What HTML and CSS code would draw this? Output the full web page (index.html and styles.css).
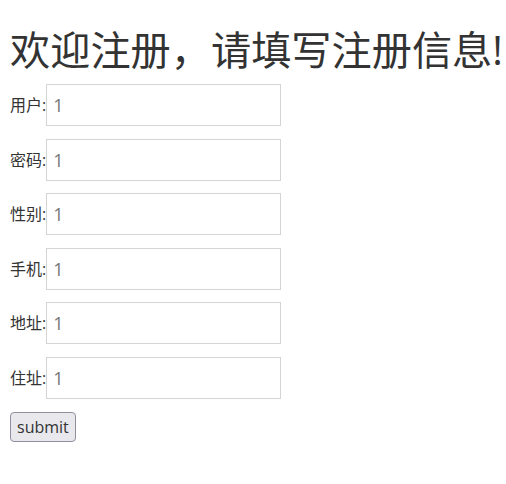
FILE: index.html
```html
<!DOCTYPE html>
<html lang="zh">
<head>
<meta charset="utf-8">
<title>注册</title>
<link rel="stylesheet" href="styles.css">
</head>
<body>
<h1 class="title">欢迎注册，请填写注册信息!</h1>
<form class="form">
  <div class="row"><label class="label">用户:</label><input class="field" type="text" placeholder="1"></div>
  <div class="row"><label class="label">密码:</label><input class="field" type="text" placeholder="1"></div>
  <div class="row"><label class="label">性别:</label><input class="field" type="text" placeholder="1"></div>
  <div class="row"><label class="label">手机:</label><input class="field" type="text" placeholder="1"></div>
  <div class="row"><label class="label">地址:</label><input class="field" type="text" placeholder="1"></div>
  <div class="row"><label class="label">住址:</label><input class="field" type="text" placeholder="1"></div>
  <button class="submit" type="button">submit</button>
</form>
</body>
</html>
```
FILE: styles.css
```css
html, body {
  margin: 0;
  padding: 0;
  background: #fff;
}
body {
  padding: 0 10px;
  font-family: "Open Sans", "Noto Sans CJK SC", sans-serif;
  color: #333;
  font-size: 16px;
}
.title {
  font-size: 40.2px;
  font-weight: 400;
  line-height: 44px;
  white-space: nowrap;
  margin: 28px 0 12px;
}
.form {
  display: flex;
  flex-direction: column;
  align-items: flex-start;
}
.row {
  display: flex;
  align-items: center;
  margin-bottom: 12.6px;
}
.label {
  font-size: 16px;
  line-height: 22px;
}
.field {
  box-sizing: border-box;
  width: 235px;
  height: 42px;
  border: 1px solid #d4d4d4;
  padding: 0 6px;
  font-family: "Open Sans", sans-serif;
  font-size: 18px;
  color: #333;
  outline: none;
}
.field::placeholder {
  color: #777;
}
.submit {
  font-family: "Open Sans", sans-serif;
  font-size: 16px;
  color: #333;
  background: #e9e9ed;
  border: 1px solid #8f8f9d;
  border-radius: 4px;
  padding: 3px 6px;
  line-height: 22px;
}
```
